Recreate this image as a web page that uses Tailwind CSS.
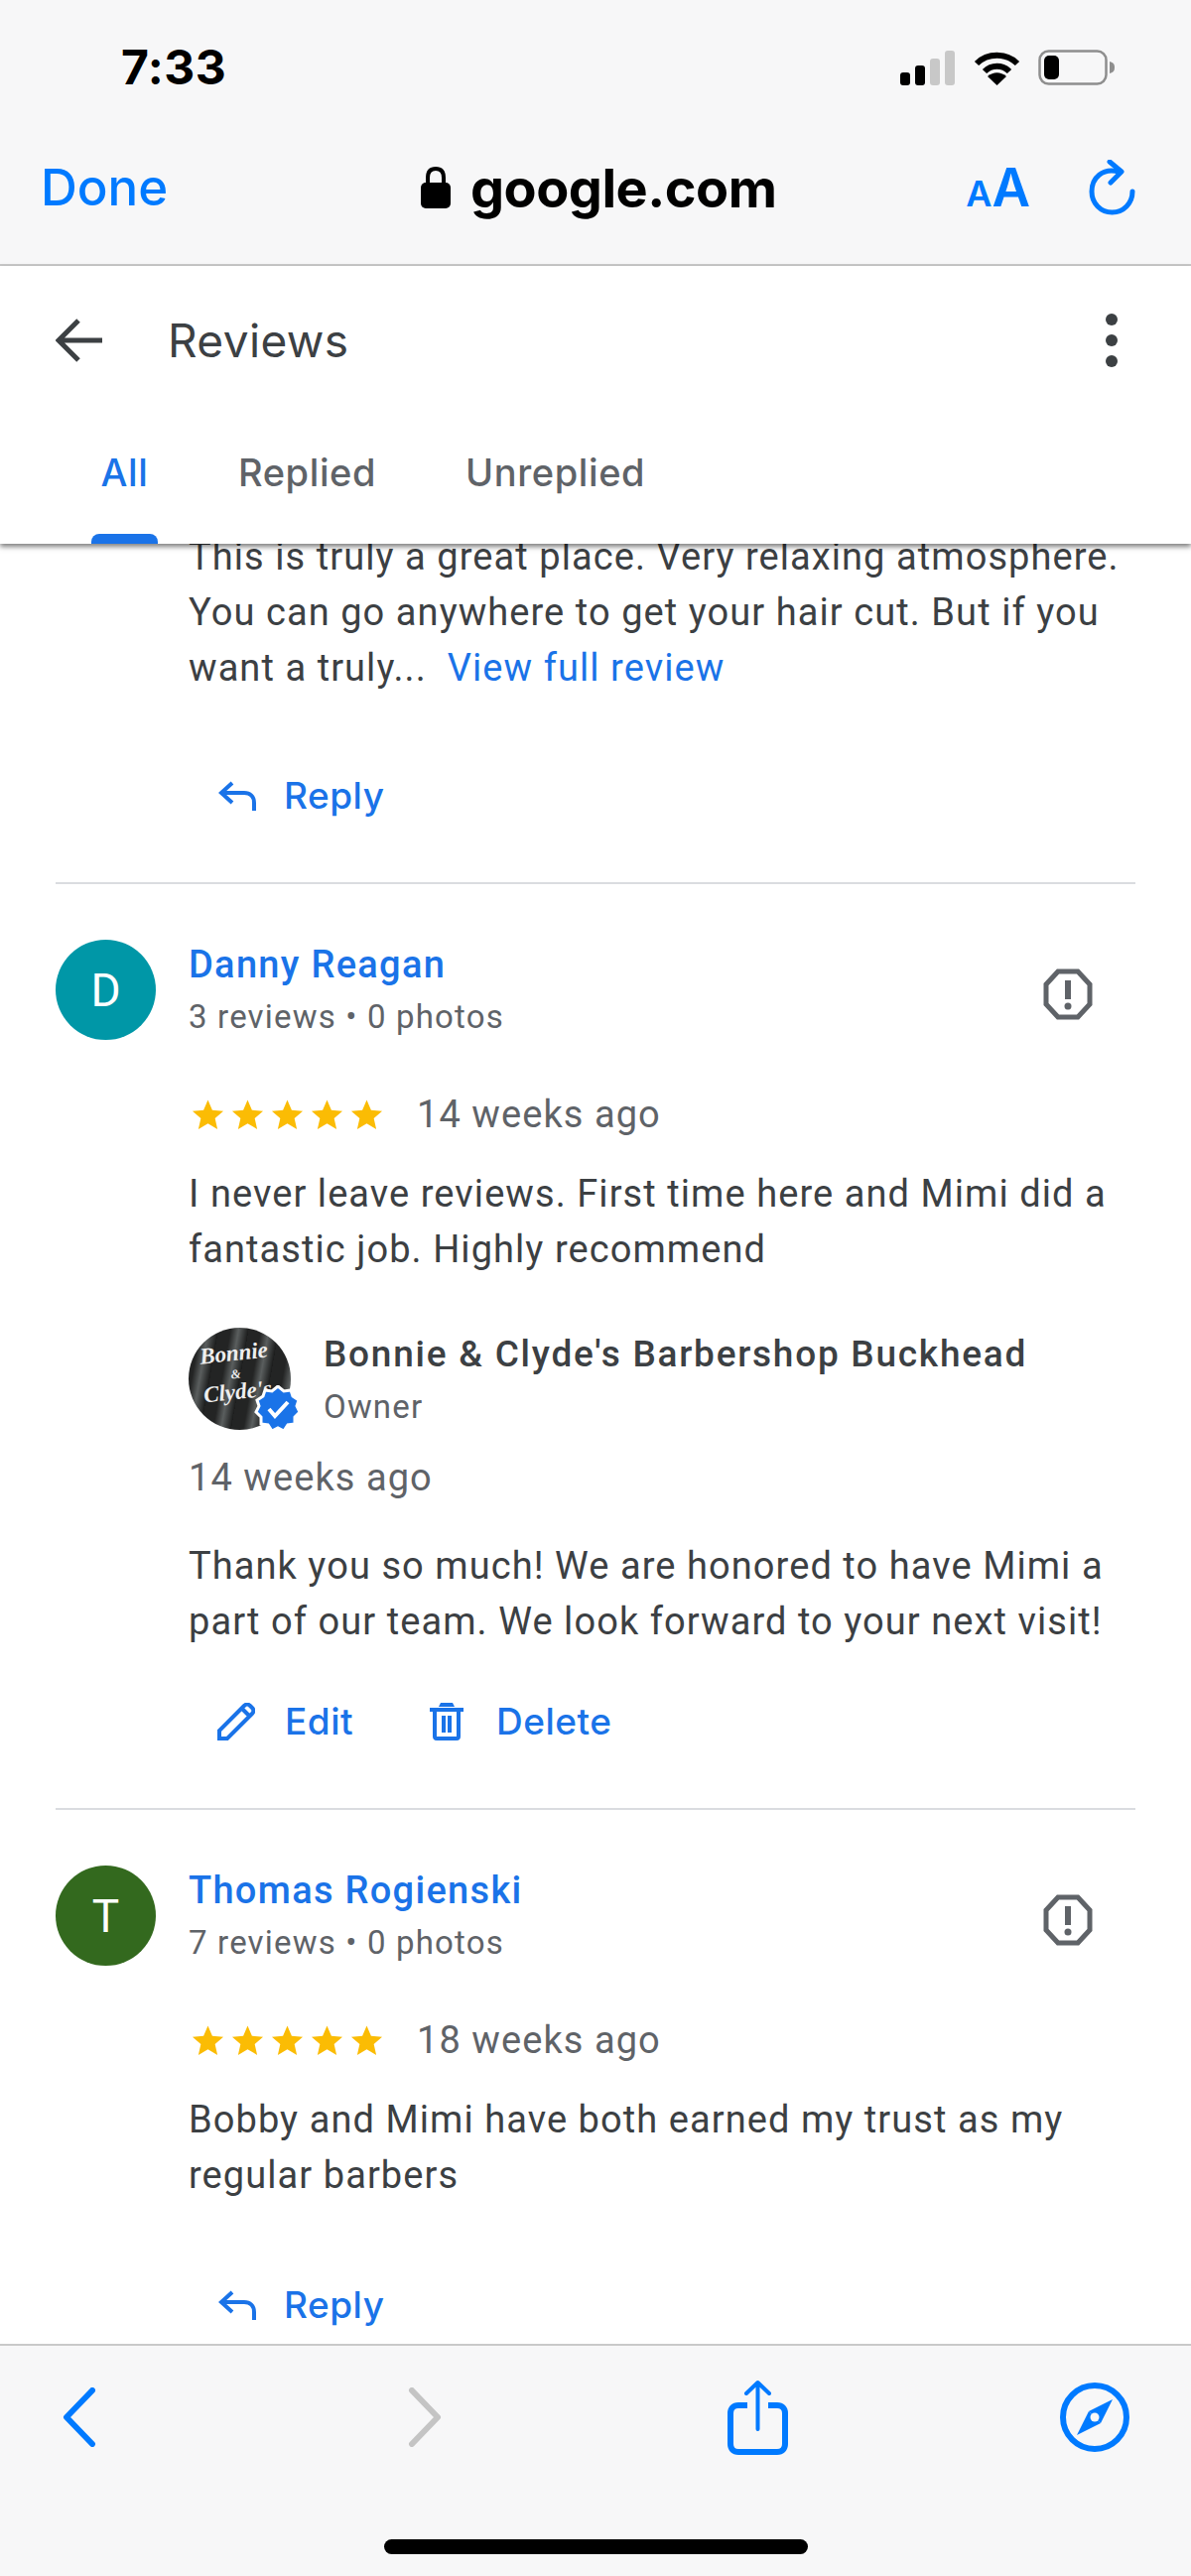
<!DOCTYPE html>
<html lang="en">
<head>
    <meta charset="UTF-8">
    <title>Reviews</title>
    <script src="https://cdn.jsdelivr.net/npm/@tailwindcss/browser@4"></script>
</head>
<body class="bg-white font-['Roboto',sans-serif]">
<div class="flex flex-col w-[1200px] h-[2596px] overflow-hidden">

    <!-- Safari top bar -->
    <div class="bg-[#f7f7f8] h-[268px] shrink-0 border-b-2 border-[#c9c9c9] font-['Inter',sans-serif]">
        <div class="flex items-center h-[136px] pl-[122px] pr-[76px]">
            <span class="text-[48px] font-bold text-black tracking-[0.5px]">7:33</span>
            <div class="ml-auto flex items-center">
                <svg width="56" height="35" viewBox="0 0 56 35">
                    <rect x="0" y="22" width="10" height="13" rx="3" fill="#000"/>
                    <rect x="15" y="15" width="10" height="20" rx="3" fill="#000"/>
                    <rect x="30" y="8" width="10" height="27" rx="3" fill="#c8c8c8"/>
                    <rect x="45" y="0" width="10" height="35" rx="3" fill="#c8c8c8"/>
                </svg>
                <svg class="ml-[18px]" width="47" height="35" viewBox="0 0 47 35">
                    <path d="M3 13 C14 2 33 2 44 13" fill="none" stroke="#000" stroke-width="6"/>
                    <path d="M11 21 C18 14 29 14 36 21" fill="none" stroke="#000" stroke-width="6"/>
                    <path d="M23.5 35 L14 26 C20 21 27 21 33 26 Z" fill="#000"/>
                </svg>
                <svg class="ml-[18px]" width="78" height="36" viewBox="0 0 78 36">
                    <rect x="1.5" y="1.5" width="67" height="33" rx="9" fill="none" stroke="#8e8e8e" stroke-width="2.5"/>
                    <rect x="6" y="6" width="15" height="24" rx="5" fill="#000"/>
                    <path d="M72 12 C76 13 77 15 77 18 C77 21 76 23 72 24 Z" fill="#8e8e8e"/>
                </svg>
            </div>
        </div>
        <div class="flex items-center h-[106px] pl-[41px] pr-[56px]">
            <span class="w-[383px] text-[51px] font-medium text-[#007aff]">Done</span>
            <svg width="30" height="42" viewBox="0 0 30 42">
                <path d="M7 18 V11 C7 5 10 2 15 2 C20 2 23 5 23 11 V18" fill="none" stroke="#000" stroke-width="4"/>
                <rect x="0" y="16" width="30" height="26" rx="5" fill="#000"/>
            </svg>
            <span class="ml-[20px] text-[54px] font-bold text-black tracking-[-0.5px]">google.com</span>
            <div class="ml-auto flex items-baseline text-[#007aff] font-semibold leading-none">
                <span class="text-[36px]">A</span><span class="text-[53px]">A</span>
            </div>
            <svg class="ml-[59px]" width="47" height="56" viewBox="0 0 47 56">
                <path d="M21 2 L33 12 L22 23" fill="none" stroke="#007aff" stroke-width="5" stroke-linecap="round" stroke-linejoin="round"/>
                <path d="M30 12 C14 8 3 18 3 32 C3 44 12 53 23.500 53 C35 53 44 44 44 32" fill="none" stroke="#007aff" stroke-width="5" stroke-linecap="round"/>
            </svg>
        </div>
    </div>

    <!-- Reviews toolbar -->
    <div class="relative z-10 bg-white h-[280px] shrink-0 shadow-[0_3px_5px_rgba(0,0,0,0.5)]">
        <div class="flex items-center h-[150px] pl-[56px] pr-[74px]">
            <svg width="48" height="44" viewBox="0 0 48 44">
                <path d="M47 22 H4 M23 2 L3 22 L23 42" fill="none" stroke="#3c4043" stroke-width="5"/>
            </svg>
            <span class="ml-[65px] text-[46px] text-[#3c4043] font-['Inter',sans-serif] tracking-[0.4px]">Reviews</span>
            <div class="ml-auto flex flex-col gap-[9px]">
                <div class="w-[12px] h-[12px] rounded-full bg-[#3c4043]"></div>
                <div class="w-[12px] h-[12px] rounded-full bg-[#3c4043]"></div>
                <div class="w-[12px] h-[12px] rounded-full bg-[#3c4043]"></div>
            </div>
        </div>
        <div class="flex h-[130px] pl-[92px] text-[38px] font-medium text-[#5f6368] font-['Inter',sans-serif] tracking-[0.6px]">
            <div class="flex flex-col w-[67px] items-center">
                <span class="mt-[30px] leading-[56px] text-[#1a73e8]">All</span>
                <div class="mt-auto w-[67px] h-[10px] bg-[#1a73e8] rounded-t-[8px]"></div>
            </div>
            <span class="ml-[81px] mt-[30px] leading-[56px] h-[56px]">Replied</span>
            <span class="ml-[90px] mt-[30px] leading-[56px] h-[56px]">Unreplied</span>
        </div>
    </div>

    <!-- Review list -->
    <div class="flex-1 overflow-hidden">
        <div class="-mt-[15px] text-[38px] leading-[56px] text-[#3c4043] tracking-[1.07px]">
            <div class="pl-[190px] pr-[40px]">
                <p>This is truly a great place. Very relaxing atmosphere.<br>You can go anywhere to get your hair cut. But if you<br>want a truly...&nbsp; <span class="text-[#1a73e8]">View full review</span></p>
                <div class="mt-[73px] flex items-center text-[#1a73e8] font-medium font-['Inter',sans-serif] text-[37px] tracking-[0.5px] pl-[30px]">
                    <svg width="38" height="30" viewBox="0 0 38 30">
                        <path d="M14 2 L3 12 L14 22 M3 12 H26 C32 12 36 16 36 22 V30" fill="none" stroke="#1a73e8" stroke-width="4"/>
                    </svg>
                    <span class="ml-[28px]">Reply</span>
                </div>
            </div>
            <div class="mt-[59px] mx-[56px] h-[2px] bg-[#dadce0]"></div>

            <!-- Danny Reagan -->
            <div class="mt-[56px] pl-[56px] pr-[99px] flex">
                <div class="w-[101px] h-[101px] rounded-full bg-[#0097a7] text-white text-[46px] tracking-normal flex items-center justify-center shrink-0">D</div>
                <div class="ml-[33px]">
                    <div class="leading-[50px] text-[#1a73e8] font-medium tracking-[1.3px]">Danny Reagan</div>
                    <div class="leading-[56px] text-[33px] text-[#5f6368] tracking-[1.18px]">3 reviews • 0 photos</div>
                </div>
                <svg class="ml-auto mt-[29px]" width="50" height="52" viewBox="0 0 50 52">
                    <path d="M15 3 H35 L47 16 V36 L35 49 H15 L3 36 V16 Z" fill="none" stroke="#5f6368" stroke-width="5"/>
                    <path d="M25 12 V31" stroke="#5f6368" stroke-width="6"/>
                    <circle cx="25" cy="38" r="3.500" fill="#5f6368"/>
                </svg>
            </div>
            <div class="pl-[190px] pr-[40px]">
                <div class="mt-[42px] flex items-center text-[#5f6368]">
                    <div class="flex gap-[7px] w-[230px] pl-[3px]">
                        <svg width="33" height="33" viewBox="0 0 24 24"><path fill="#fbbc04" d="M12 1l3.200 7.500 8.100.7-6.100 5.300 1.800 8L12 18.300 5 22.500l1.800-8L.7 9.200l8.100-.7z"/></svg>
                        <svg width="33" height="33" viewBox="0 0 24 24"><path fill="#fbbc04" d="M12 1l3.200 7.500 8.100.7-6.100 5.300 1.800 8L12 18.300 5 22.500l1.800-8L.7 9.200l8.100-.7z"/></svg>
                        <svg width="33" height="33" viewBox="0 0 24 24"><path fill="#fbbc04" d="M12 1l3.200 7.500 8.100.7-6.100 5.300 1.800 8L12 18.300 5 22.500l1.800-8L.7 9.200l8.100-.7z"/></svg>
                        <svg width="33" height="33" viewBox="0 0 24 24"><path fill="#fbbc04" d="M12 1l3.200 7.500 8.100.7-6.100 5.300 1.800 8L12 18.300 5 22.500l1.800-8L.7 9.200l8.100-.7z"/></svg>
                        <svg width="33" height="33" viewBox="0 0 24 24"><path fill="#fbbc04" d="M12 1l3.200 7.500 8.100.7-6.100 5.300 1.800 8L12 18.300 5 22.500l1.800-8L.7 9.200l8.100-.7z"/></svg>
                    </div>
                    <span>14 weeks ago</span>
                </div>
                <p class="mt-[24px]">I never leave reviews. First time here and Mimi did a<br>fantastic job. Highly recommend</p>

                <div class="mt-[51px] flex h-[103px]">
                    <div class="relative w-[103px] h-[103px] shrink-0">
                        <div class="w-[103px] h-[103px] rounded-full overflow-hidden bg-[repeating-linear-gradient(100deg,#232424_0px,#232424_12px,#5a5e5e_20px,#1b1c1c_30px)] pb-[12px] pr-[8px] flex items-center justify-center text-center text-[#eeeeee] font-['Liberation_Serif',serif] italic font-bold leading-[18px] text-[23px] tracking-normal">
                            <span class="-rotate-6">Bonnie<br><span class="text-[13px]">&amp;</span><br>Clyde's</span>
                        </div>
                        <svg class="absolute left-[66px] top-[58px]" width="48" height="48" viewBox="-24 -24 48 48">
                            <polygon fill="#1a73e8" stroke="#fff" stroke-width="3" points="0,-23 6,-18 13,-19 15,-13 21,-9 19,-3 22,3 17,8 17,15 10,16 6,22 0,19 -6,22 -10,16 -17,15 -17,8 -22,3 -19,-3 -21,-9 -15,-13 -13,-19 -6,-18"/>
                            <path d="M-9 0 L-3 7 L10 -7" fill="none" stroke="#fff" stroke-width="4"/>
                        </svg>
                    </div>
                    <div class="ml-[33px] pt-[2px]">
                        <div class="leading-[50px] font-medium text-[37px] tracking-[1.75px] whitespace-nowrap">Bonnie &amp; Clyde's Barbershop Buckhead</div>
                        <div class="leading-[56px] text-[33px] text-[#5f6368] tracking-[1.18px]">Owner</div>
                    </div>
                </div>
                <div class="mt-[20px] text-[#5f6368]">14 weeks ago</div>
                <p class="mt-[33px]">Thank you so much! We are honored to have Mimi a<br>part of our team. We look forward to your next visit!</p>
                <div class="mt-[45px] flex items-center text-[#1a73e8] font-medium font-['Inter',sans-serif] text-[37px] tracking-[0.5px] pl-[29px]">
                    <svg width="38" height="38" viewBox="0 0 38 38">
                        <path d="M2 36 V28 L27 3 C29 1 31 1 33 3 L35 5 C37 7 37 9 35 11 L10 36 Z M25 6 L32 13" fill="none" stroke="#1a73e8" stroke-width="4"/>
                    </svg>
                    <span class="ml-[30px]">Edit</span>
                    <svg class="ml-[77px]" width="34" height="38" viewBox="0 0 34 38">
                        <path d="M0 5 H34 V9 H31 V34 C31 36 30 38 27 38 H7 C4 38 3 36 3 34 V9 H0 Z M7 9 V34 H27 V9 Z M11 0 H23 L25 4 H9 Z M12 13 H16 V30 H12 Z M18 13 H22 V30 H18 Z" fill="#1a73e8" fill-rule="evenodd"/>
                    </svg>
                    <span class="ml-[33px]">Delete</span>
                </div>
            </div>
            <div class="mt-[59px] mx-[56px] h-[2px] bg-[#dadce0]"></div>

            <!-- Thomas Rogienski -->
            <div class="mt-[56px] pl-[56px] pr-[99px] flex">
                <div class="w-[101px] h-[101px] rounded-full bg-[#33691e] text-white text-[46px] tracking-normal flex items-center justify-center shrink-0">T</div>
                <div class="ml-[33px]">
                    <div class="leading-[50px] text-[#1a73e8] font-medium tracking-[1.3px]">Thomas Rogienski</div>
                    <div class="leading-[56px] text-[33px] text-[#5f6368] tracking-[1.18px]">7 reviews • 0 photos</div>
                </div>
                <svg class="ml-auto mt-[29px]" width="50" height="52" viewBox="0 0 50 52">
                    <path d="M15 3 H35 L47 16 V36 L35 49 H15 L3 36 V16 Z" fill="none" stroke="#5f6368" stroke-width="5"/>
                    <path d="M25 12 V31" stroke="#5f6368" stroke-width="6"/>
                    <circle cx="25" cy="38" r="3.500" fill="#5f6368"/>
                </svg>
            </div>
            <div class="pl-[190px] pr-[40px]">
                <div class="mt-[42px] flex items-center text-[#5f6368]">
                    <div class="flex gap-[7px] w-[230px] pl-[3px]">
                        <svg width="33" height="33" viewBox="0 0 24 24"><path fill="#fbbc04" d="M12 1l3.200 7.500 8.100.7-6.100 5.300 1.800 8L12 18.300 5 22.500l1.800-8L.7 9.200l8.100-.7z"/></svg>
                        <svg width="33" height="33" viewBox="0 0 24 24"><path fill="#fbbc04" d="M12 1l3.200 7.500 8.100.7-6.100 5.300 1.800 8L12 18.300 5 22.500l1.800-8L.7 9.200l8.100-.7z"/></svg>
                        <svg width="33" height="33" viewBox="0 0 24 24"><path fill="#fbbc04" d="M12 1l3.200 7.500 8.100.7-6.100 5.300 1.800 8L12 18.300 5 22.500l1.800-8L.7 9.200l8.100-.7z"/></svg>
                        <svg width="33" height="33" viewBox="0 0 24 24"><path fill="#fbbc04" d="M12 1l3.200 7.500 8.100.7-6.100 5.300 1.800 8L12 18.300 5 22.500l1.800-8L.7 9.200l8.100-.7z"/></svg>
                        <svg width="33" height="33" viewBox="0 0 24 24"><path fill="#fbbc04" d="M12 1l3.200 7.500 8.100.7-6.100 5.300 1.800 8L12 18.300 5 22.500l1.800-8L.7 9.200l8.100-.7z"/></svg>
                    </div>
                    <span>18 weeks ago</span>
                </div>
                <p class="mt-[24px]">Bobby and Mimi have both earned my trust as my<br>regular barbers</p>
                <div class="mt-[75px] flex items-center text-[#1a73e8] font-medium font-['Inter',sans-serif] text-[37px] tracking-[0.5px] pl-[30px]">
                    <svg width="38" height="30" viewBox="0 0 38 30">
                        <path d="M14 2 L3 12 L14 22 M3 12 H26 C32 12 36 16 36 22 V30" fill="none" stroke="#1a73e8" stroke-width="4"/>
                    </svg>
                    <span class="ml-[28px]">Reply</span>
                </div>
            </div>
        </div>
    </div>

    <!-- Safari bottom bar -->
    <div class="bg-[#f7f7f8] h-[234px] shrink-0 border-t-2 border-[#c9c9c9]">
        <div class="flex items-center h-[144px] pl-[63px]">
            <svg width="34" height="60" viewBox="0 0 34 60">
                <path d="M30 3 L4 30 L30 57" fill="none" stroke="#007aff" stroke-width="6" stroke-linecap="round" stroke-linejoin="round"/>
            </svg>
            <svg class="ml-[314px]" width="34" height="60" viewBox="0 0 34 60">
                <path d="M4 3 L30 30 L4 57" fill="none" stroke="#c4c4c4" stroke-width="6" stroke-linecap="round" stroke-linejoin="round"/>
            </svg>
            <svg class="ml-[288px]" width="61" height="76" viewBox="0 0 61 76">
                <path d="M20 26 H11 C6 26 3 29 3 34 V65 C3 70 6 73 11 73 H50 C55 73 58 70 58 65 V34 C58 29 55 26 50 26 H41" fill="none" stroke="#007aff" stroke-width="6"/>
                <path d="M30.500 50 V3 M19 14 L30.500 3 L42 14" fill="none" stroke="#007aff" stroke-width="4" stroke-linecap="round" stroke-linejoin="round"/>
            </svg>
            <svg class="ml-[274px]" width="70" height="70" viewBox="0 0 70 70">
                <circle cx="35" cy="35" r="32" fill="none" stroke="#007aff" stroke-width="6"/>
                <path d="M53 17 L41 41 L29 29 Z" fill="#007aff"/>
                <path d="M17 53 L29 29 L41 41 Z" fill="#007aff"/>
                <circle cx="35" cy="35" r="4.500" fill="#f7f7f8"/>
            </svg>
        </div>
        <div class="mt-[51px] mx-auto w-[427px] h-[15px] rounded-full bg-black"></div>
    </div>
</div>
</body>
</html>
